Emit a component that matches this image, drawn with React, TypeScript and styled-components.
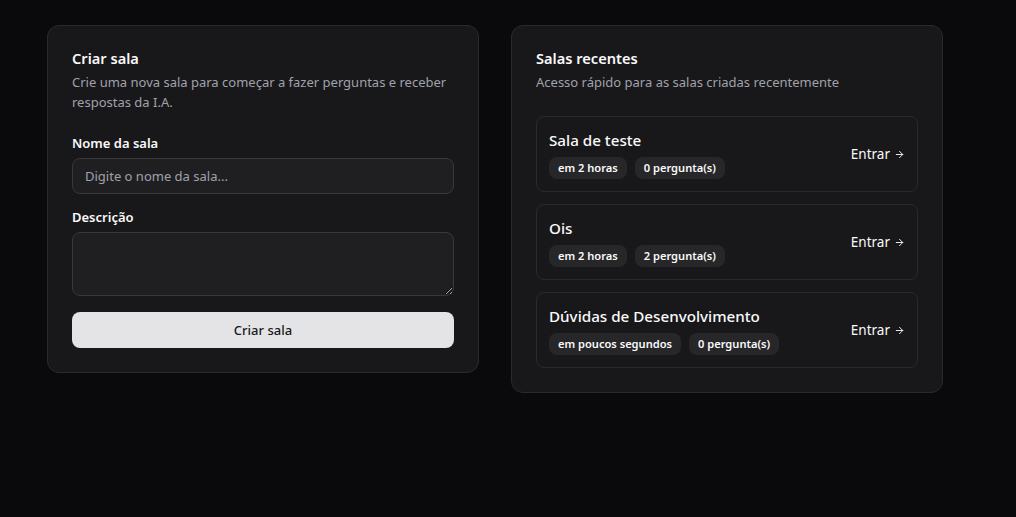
import React from 'react'
import styled, { createGlobalStyle } from 'styled-components'
import { ArrowRight } from 'lucide-react'

const GlobalStyle = createGlobalStyle`
  html, body {
    margin: 0;
    background: #0a0a0c;
    color: #fafafa;
    font-family: "Noto Sans", "Open Sans", sans-serif;
  }
  * { box-sizing: border-box; }
`

const Page = styled.div`
  min-height: 517px;
  padding: 25px 0 0 47px;
`

const Grid = styled.div`
  display: grid;
  grid-template-columns: 432px 432px;
  gap: 32px;
  align-items: start;
`

const Card = styled.section`
  background: #18181b;
  border: 1px solid #2a2a2e;
  border-radius: 12px;
  padding: 24px;
`

const CardTitle = styled.h2`
  margin: 0;
  font-size: 14.6px;
  line-height: 16px;
  font-weight: 600;
  color: #fafafa;
`

const CardDesc = styled.p`
  margin: 6px 0 0;
  font-size: 13px;
  line-height: 20px;
  color: #a1a1aa;
`

const Form = styled.form`
  display: flex;
  flex-direction: column;
  gap: 16px;
  margin-top: 24px;
`

const Field = styled.div`
  display: flex;
  flex-direction: column;
  gap: 8px;
`

const Label = styled.label`
  font-size: 13px;
  line-height: 14px;
  font-weight: 600;
  color: #fafafa;
`

const Input = styled.input`
  height: 36px;
  width: 100%;
  padding: 0 12px;
  border: 1px solid #38383d;
  border-radius: 8px;
  background: #1f1f22;
  color: #fafafa;
  font: inherit;
  font-size: 13px;
  outline: none;
  &::placeholder { color: #a1a1aa; }
`

const TextArea = styled.textarea`
  height: 64px;
  width: 100%;
  padding: 8px 12px;
  border: 1px solid #38383d;
  border-radius: 8px;
  background: #1f1f22;
  color: #fafafa;
  font: inherit;
  font-size: 13px;
  outline: none;
  display: block;
`

const SubmitButton = styled.button`
  height: 36px;
  width: 100%;
  border: none;
  border-radius: 8px;
  background: #e4e4e7;
  color: #18181b;
  font: inherit;
  font-size: 13px;
  font-weight: 500;
  cursor: pointer;
`

const RoomList = styled.div`
  display: flex;
  flex-direction: column;
  gap: 12px;
  margin-top: 24px;
`

const RoomItem = styled.a`
  display: flex;
  align-items: center;
  justify-content: space-between;
  height: 76px;
  padding: 0 12px;
  border: 1px solid #2a2a2e;
  border-radius: 8px;
  text-decoration: none;
  color: inherit;
`

const RoomInfo = styled.div`
  display: flex;
  flex-direction: column;
  gap: 7px;
`

const RoomName = styled.h3`
  margin: 0;
  font-size: 15.2px;
  line-height: 20px;
  font-weight: 500;
  color: #fafafa;
`

const Badges = styled.div`
  display: flex;
  gap: 8px;
`

const Badge = styled.span`
  display: inline-flex;
  align-items: center;
  height: 22px;
  padding: 0 9px;
  border-radius: 8px;
  background: #27272a;
  font-size: 11.1px;
  font-weight: 600;
  color: #fafafa;
`

const Enter = styled.span`
  display: inline-flex;
  align-items: center;
  gap: 4px;
  font-size: 13.5px;
  color: #fafafa;
`

const rooms = [
  { name: 'Sala de teste', when: 'em 2 horas', count: 0 },
  { name: 'Ois', when: 'em 2 horas', count: 2 },
  { name: 'Dúvidas de Desenvolvimento', when: 'em poucos segundos', count: 0 },
]

const App = () => {
  return (
    <Page>
      <GlobalStyle />
      <Grid>
        <Card>
          <CardTitle>Criar sala</CardTitle>
          <CardDesc>Crie uma nova sala para começar a fazer perguntas e receber respostas da I.A.</CardDesc>
          <Form onSubmit={(e) => e.preventDefault()}>
            <Field>
              <Label>Nome da sala</Label>
              <Input placeholder="Digite o nome da sala..." />
            </Field>
            <Field>
              <Label>Descrição</Label>
              <TextArea />
            </Field>
            <SubmitButton type="submit">Criar sala</SubmitButton>
          </Form>
        </Card>
        <Card>
          <CardTitle>Salas recentes</CardTitle>
          <CardDesc>Acesso rápido para as salas criadas recentemente</CardDesc>
          <RoomList>
            {rooms.map((room) => (
              <RoomItem key={room.name} href="#">
                <RoomInfo>
                  <RoomName>{room.name}</RoomName>
                  <Badges>
                    <Badge>{room.when}</Badge>
                    <Badge>{room.count} pergunta(s)</Badge>
                  </Badges>
                </RoomInfo>
                <Enter>
                  Entrar <ArrowRight size={11} strokeWidth={2} />
                </Enter>
              </RoomItem>
            ))}
          </RoomList>
        </Card>
      </Grid>
    </Page>
  )
}

export default App
